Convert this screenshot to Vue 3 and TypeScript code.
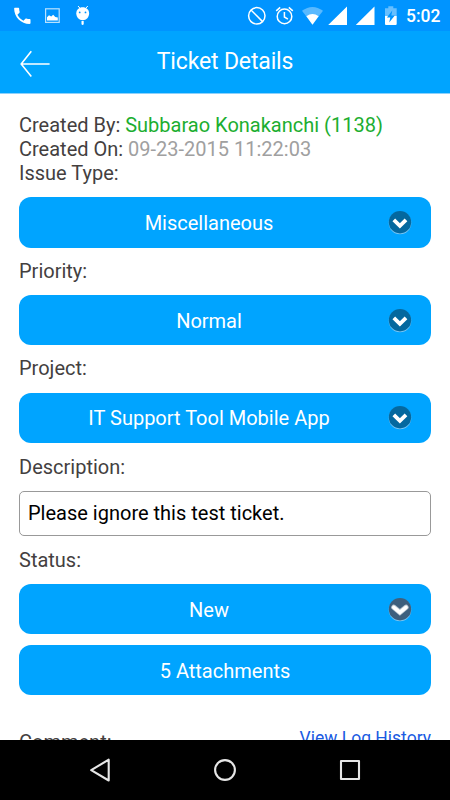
<script setup lang="ts">
interface Picker {
  label: string
  value: string
}

const pickers: Picker[] = [
  { label: 'Issue Type:', value: 'Miscellaneous' },
  { label: 'Priority:', value: 'Normal' },
  { label: 'Project:', value: 'IT Support Tool Mobile App' },
]
const status: Picker = { label: 'Status:', value: 'New' }
</script>

<template>
  <div class="screen">
    <div class="statusbar">
      <svg class="icons-left" width="100" height="31" viewBox="0 0 100 31" fill="#fff">
        <path transform="translate(11.4 4.9) scale(.91)" d="M6.62 10.79c1.44 2.83 3.76 5.14 6.59 6.59l2.2-2.2c.27-.27.67-.36 1.02-.24 1.12.37 2.33.57 3.57.57.55 0 1 .45 1 1V20c0 .55-.45 1-1 1-9.39 0-17-7.61-17-17 0-.55.45-1 1-1h3.5c.55 0 1 .45 1 1 0 1.25.2 2.45.57 3.57.11.35.03.74-.25 1.02l-2.2 2.2z" />
        <rect x="45.6" y="8.8" width="13.6" height="13.6" fill="none" stroke="#fff" stroke-opacity=".72" stroke-width="1.2" />
        <path d="M47 20.5v-3.2l2-2.1 2.2 1.2 2-1.7 2.1 2.4 2.5.4v3z" />
        <path d="M78 6l2 2.2M87.8 6l-2 2.2" stroke="#fff" stroke-width="1" />
        <path d="M76.3 13.2c0-3.5 2.8-6 6.4-6s6.4 2.5 6.4 6c0 3.8-2.7 7-6.4 7s-6.4-3.2-6.4-7z" />
        <circle cx="79.7" cy="12.4" r=".9" fill="#0094ff" />
        <circle cx="85.5" cy="12.4" r=".9" fill="#0094ff" />
        <path d="M81.5 21h2.2v3.2q-1.1 1.4-2.2 0z" />
      </svg>
      <svg class="icons-right" width="160" height="31" viewBox="240 0 160 31" fill="#fff">
        <g fill="none" stroke="#fff" stroke-width="1.5">
          <circle cx="256.8" cy="15.8" r="8.2" />
          <path d="M251 10l11.6 11.6" />
          <circle cx="284.5" cy="16.4" r="7.3" />
          <path d="M276.2 10.9l4-3.5M292.8 10.9l-4-3.5M284.4 12v5l3.5 2.1" />
        </g>
        <path d="M302 10.8q10.5-7.6 21 0L312.5 24.6z" fill-opacity=".35" />
        <path d="M306.4 16.2q6.1-4.6 12.2 0L312.5 24.8z" />
        <path d="M328.2 25L347 6.5V25zM355.8 25L374.5 6.5V25z" />
        <path d="M385 8.2h3.3V6.3h5v1.9h3.4v8H385z" fill-opacity=".4" />
        <path d="M385 16.1h11.7V24a1 1 0 0 1-1 1H386a1 1 0 0 1-1-1z" />
        <path d="M392.3 10.4l-5.4 7h3.4l-1.1 5.2 5.6-7.2h-3.5z" fill="#0094ff" />
      </svg>
      <span class="clock">5:02</span>
    </div>

    <header class="header">
      <svg class="back" width="32" height="28" viewBox="0 0 32 28" fill="none" stroke="#fff" stroke-width="1.6">
        <path d="M30.6 14H2.2M12.3 1.2L2.2 14l10.1 12.6" />
      </svg>
      <h1 class="title">Ticket Details</h1>
    </header>

    <main class="content">
      <p class="line">Created By: <span class="author">Subbarao Konakanchi (1138)</span></p>
      <p class="line">Created On: <span class="date">09-23-2015 11:22:03</span></p>

      <div v-for="picker in pickers" :key="picker.label" class="field">
        <div class="label">{{ picker.label }}</div>
        <button class="button">
          <span class="value">{{ picker.value }}</span>
          <svg class="chevron" width="24" height="25" viewBox="0 0 24 25">
            <circle cx="12" cy="13" r="11.3" fill="#7cc7f3" />
            <circle cx="12" cy="12.2" r="11.2" fill="#04689f" />
            <path d="M5.8 9.8l6.1 6 6.1-6" fill="none" stroke="#fff" stroke-width="3.8" />
          </svg>
        </button>
      </div>

      <div class="field description">
        <div class="label">Description:</div>
        <div class="input">Please ignore this test ticket.</div>
      </div>

      <div class="field status">
        <div class="label">{{ status.label }}</div>
        <button class="button">
          <span class="value">{{ status.value }}</span>
          <svg class="chevron" width="24" height="25" viewBox="0 0 24 25">
            <circle cx="12" cy="13" r="11.3" fill="#7cc7f3" />
            <circle cx="12" cy="12.2" r="11.2" fill="#3e5f7d" />
            <path d="M5.8 10.3l6.1 5 6.1-5" fill="none" stroke="#b9c6d1" stroke-width="5.2" stroke-linecap="round" />
            <path d="M5.8 10.3l6.1 5 6.1-5" fill="none" stroke="#fff" stroke-width="3.6" stroke-linecap="round" />
          </svg>
        </button>
      </div>

      <button class="button attachments"><span class="value">5 Attachments</span></button>

      <div class="footer-row">
        <span class="comment">Comment:</span>
        <a class="log">View Log History</a>
      </div>
    </main>

    <nav class="navbar">
      <svg width="24" height="26" viewBox="0 0 24 26"><path d="M20.7 2.7v20.8L3.2 13.1z" /></svg>
      <svg width="24" height="26" viewBox="0 0 24 26"><circle cx="12" cy="13" r="9.9" /></svg>
      <svg width="24" height="26" viewBox="0 0 24 26"><rect x="3" y="4" width="18" height="18" /></svg>
    </nav>
  </div>
</template>

<style>
body {
  margin: 0;
  background: #fff;
}
</style>

<style scoped>
.screen {
  width: 450px;
  height: 800px;
  display: flex;
  flex-direction: column;
  overflow: hidden;
  background: #fff;
  font-family: Roboto, "Liberation Sans", sans-serif;
  font-size: 20px;
  color: #443f3f;
}
.statusbar {
  flex: none;
  height: 31px;
  display: flex;
  background: #0094ff;
  color: #fff;
}
.icons-right {
  margin-left: 140px;
}
.clock {
  margin-left: 6px;
  font-size: 17.5px;
  font-weight: 500;
  line-height: 33px;
  white-space: nowrap;
}
.header {
  flex: none;
  height: 62px;
  display: grid;
  grid-template-columns: 60px 1fr 60px;
  align-items: center;
  background: #00a4ff;
  border-bottom: 1px solid #8dd1fb;
}
.back {
  margin: 4px 0 0 19px;
}
.title {
  margin: 0 0 1px;
  color: #fff;
  font-size: 23px;
  font-weight: 400;
  letter-spacing: -0.15px;
  text-align: center;
}
.content {
  flex: 1;
  min-height: 0;
  overflow: hidden;
  padding: 19px 19px 0;
}
.line,
.label {
  margin: 0;
  height: 24px;
  line-height: 24px;
  white-space: nowrap;
}
.author {
  color: #1cae30;
}
.date {
  color: #a0a0a0;
}
.field .label {
  height: 36.3px;
  line-height: 25px;
}
.field + .field .label {
  height: 47.3px;
  line-height: 47px;
}
.field + .description .label,
.field + .status .label {
  height: 48px;
  line-height: 48px;
}
.button {
  width: 100%;
  height: 50.4px;
  margin: 0;
  padding: 0 19px 0 0;
  display: grid;
  grid-template-columns: 380px 1fr;
  align-items: center;
  border: 0;
  border-radius: 12px;
  background: #00a4ff;
  color: #fff;
  font: inherit;
}
.value {
  padding-top: 1px;
  text-align: center;
}
.chevron {
  margin-left: -11px;
}
.input {
  height: 43px;
  padding-left: 8px;
  border: 1px solid #999;
  border-radius: 5px;
  color: #000;
  line-height: 43px;
}
.attachments {
  margin-top: 10.3px;
  grid-template-columns: 412px;
}
.attachments .value {
  padding-top: 2px;
}
.footer-row {
  display: flex;
  justify-content: space-between;
  margin-top: 30px;
  white-space: nowrap;
}
.comment {
  padding-top: 5px;
  line-height: 24px;
}
.log {
  color: #1a5be2;
  font-size: 17.5px;
  line-height: 26px;
}
.navbar {
  flex: none;
  height: 60px;
  display: flex;
  justify-content: center;
  align-items: center;
  gap: 101px;
  background: #000;
}
.navbar svg {
  fill: none;
  stroke: #e6e6e6;
  stroke-width: 2.1;
  stroke-linejoin: round;
}
</style>
